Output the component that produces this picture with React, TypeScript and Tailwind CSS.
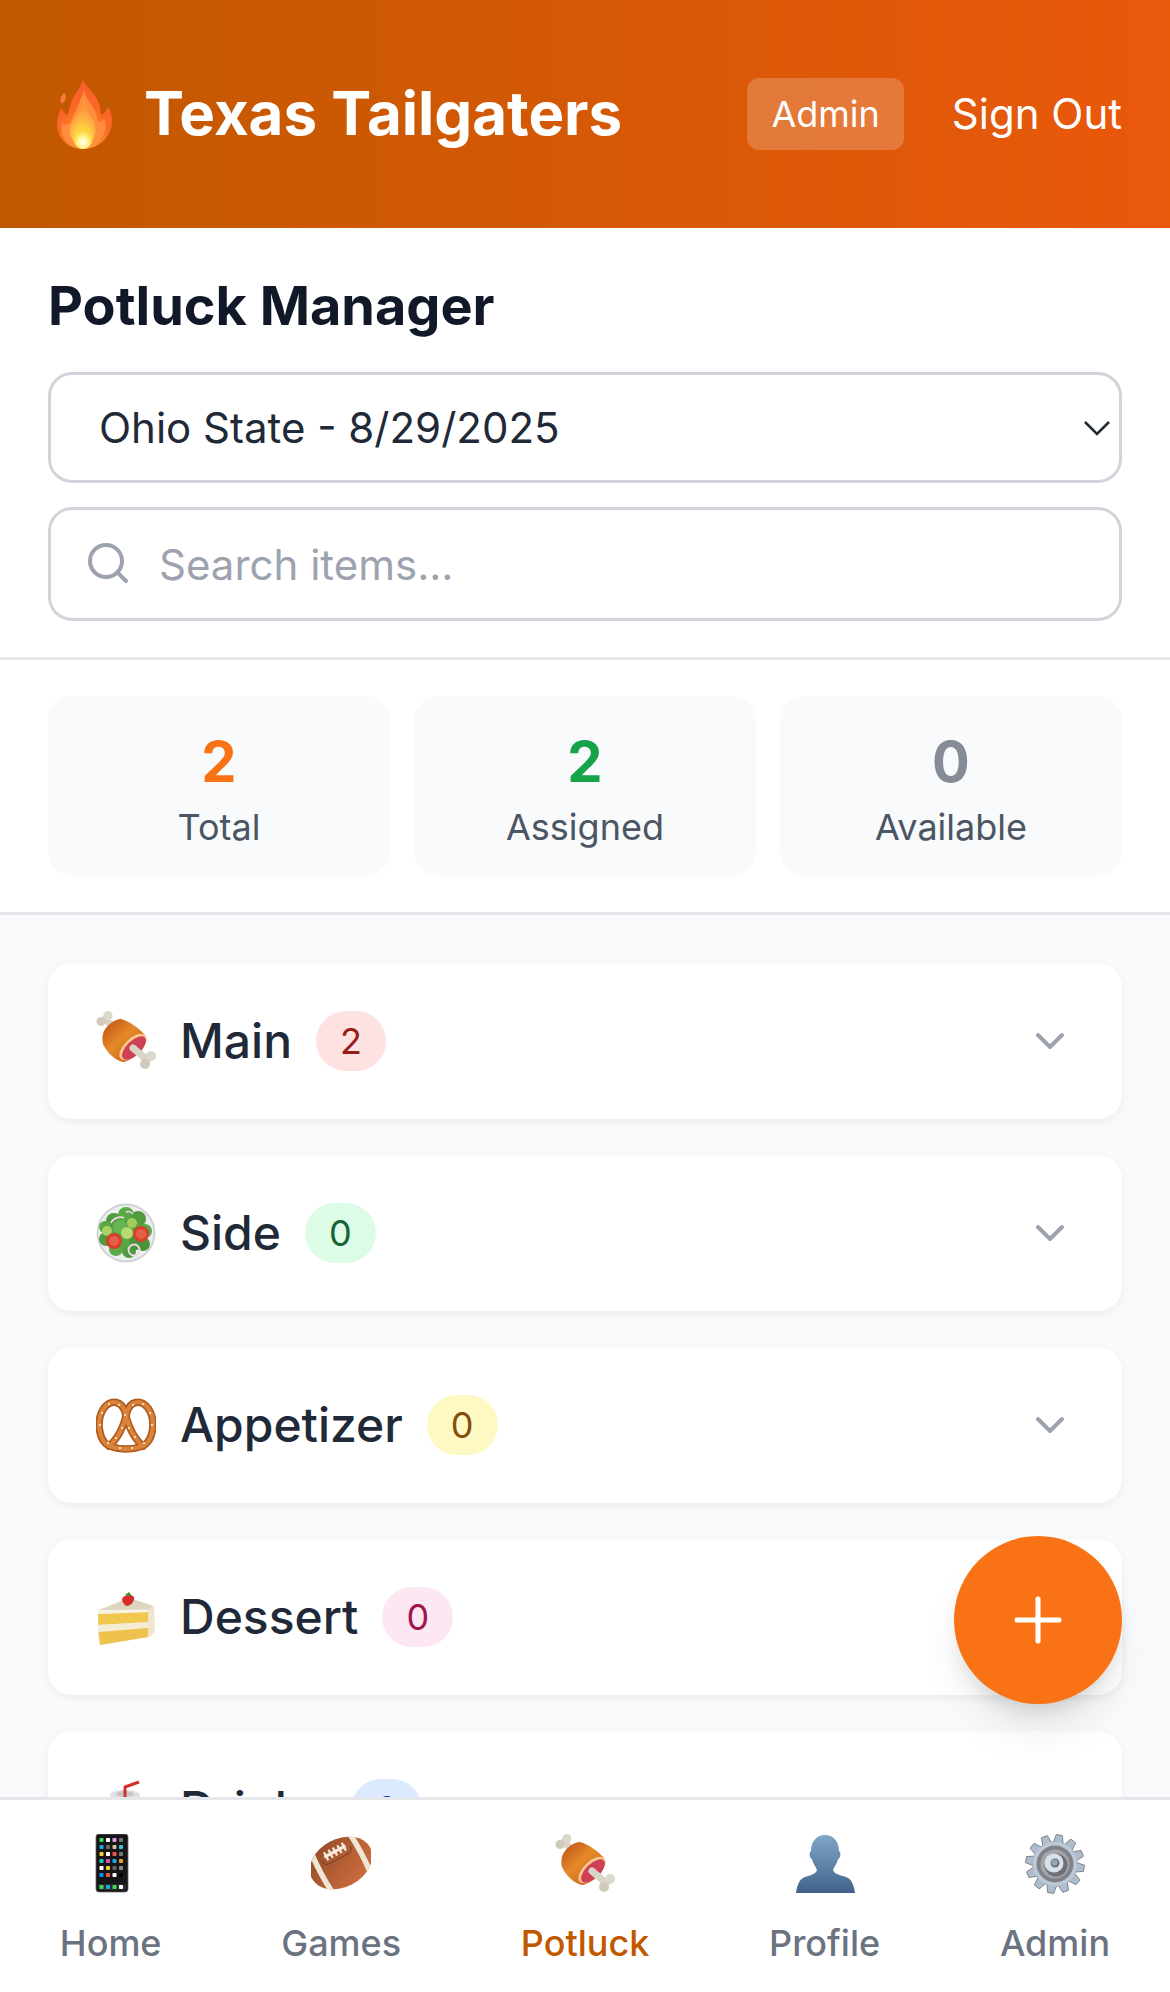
import React from "react";

function Flame() {
  return (
    <svg viewBox="0 0 90 90" className="w-[90px] h-[90px] shrink-0 -ml-2 mt-[2px]">
      <defs>
        <radialGradient id="fl1" cx="50%" cy="88%" r="85%">
          <stop offset="0" stopColor="#ffb02e" />
          <stop offset="0.55" stopColor="#fb6a24" />
          <stop offset="1" stopColor="#fa5a30" />
        </radialGradient>
        <radialGradient id="fl2" cx="50%" cy="90%" r="70%">
          <stop offset="0" stopColor="#fff9c0" />
          <stop offset="0.35" stopColor="#ffd84a" />
          <stop offset="1" stopColor="#ff9a3a" />
        </radialGradient>
        <radialGradient id="fl3" cx="50%" cy="72%" r="50%">
          <stop offset="0" stopColor="#ffffff" />
          <stop offset="0.5" stopColor="#fff48a" />
          <stop offset="1" stopColor="#ffd03a" />
        </radialGradient>
      </defs>
      <path d="M43 7C43 15 51 19 56 27C60 34 61 40 61 45C64 44 66 41 68 37C71 42 73 48 72 54C70 68 58 79 43 79C28 79 17 68 17 54C17 48 19 42 22 38C23 42 25 44 27 45C29 42 30 36 32 30C35 23 42 17 43 7Z" fill="url(#fl1)" />
      <path d="M24 23C27 25 26 30 22 34C19 30 21 26 24 23Z" fill="#fa7a40" />
      <path d="M44 20C46 31 55 36 57 48C58 54 61 53 64 49C68 58 63 71 52 76C47 79 38 79 33 76C24 71 20 62 22 53C25 56 29 55 31 52C34 44 40 33 44 20Z" fill="#ff8f3f" />
      <path d="M44 30C45 40 53 47 55 56C57 65 52 73 44 78C35 75 28 66 30 57C32 49 42 42 44 30Z" fill="url(#fl2)" />
      <ellipse cx="43" cy="67" rx="10" ry="12" fill="url(#fl3)" />
    </svg>
  );
}

function Meat() {
  return (
    <svg viewBox="0 0 60 60" className="w-[60px] h-[60px] shrink-0">
      <defs>
        <linearGradient id="mt1" x1="0.15" y1="0.15" x2="0.8" y2="0.85">
          <stop offset="0" stopColor="#c9601a" />
          <stop offset="0.45" stopColor="#e58a2a" />
          <stop offset="1" stopColor="#cc6416" />
        </linearGradient>
      </defs>
      <line x1="9" y1="8" x2="17" y2="16" stroke="#d8d4c8" strokeWidth="7" strokeLinecap="round" />
      <circle cx="12" cy="4.5" r="4.5" fill="#dcd8cc" />
      <circle cx="5" cy="10.5" r="4.5" fill="#cfcabc" />
      <path d="M8 20C12 13 19 8 25 8C33 10 44 18 49 24C50 27 48 33 44 39C39 46 32 51 27 51C20 50 11 42 7 33C6 29 6 24 8 20Z" fill="url(#mt1)" />
      <ellipse cx="37" cy="36" rx="8.5" ry="17" transform="rotate(46 37 36)" fill="#f8c88f" />
      <ellipse cx="38" cy="37" rx="7.2" ry="15" transform="rotate(46 38 37)" fill="#cf3f55" />
      <line x1="37" y1="37" x2="51" y2="49" stroke="#d8d4c8" strokeWidth="7" strokeLinecap="round" />
      <circle cx="55" cy="45" r="5" fill="#dcd8cc" />
      <circle cx="49" cy="53" r="5" fill="#cfcabc" />
    </svg>
  );
}

function Salad() {
  const leaves = [
    [18, 18, 8, "#4f9b3e"], [30, 12, 8, "#5aa946"], [42, 16, 8, "#4f9b3e"], [49, 28, 7, "#5aa946"], [47, 41, 7, "#4a9339"], [33, 48, 7, "#4f9b3e"], [20, 46, 7, "#5aa946"], [10, 36, 7, "#4f9b3e"], [9, 24, 6, "#5aa946"], [30, 30, 16, "#57a644"], [24, 24, 7, "#67b552"], [40, 40, 7, "#4a9339"],
  ] as const;
  return (
    <svg viewBox="0 0 60 60" className="w-[60px] h-[60px] shrink-0">
      <circle cx="30" cy="30" r="29.5" fill="#d0d3d4" />
      <circle cx="30" cy="30" r="27.5" fill="#eceeef" />
      {leaves.map((l, i) => (
        <circle key={i} cx={l[0]} cy={l[1]} r={l[2]} fill={l[3]} />
      ))}
      <circle cx="11" cy="28" r="5" fill="#a8d264" />
      <circle cx="31" cy="30" r="6" fill="#b8da70" />
      <circle cx="36" cy="20" r="5" fill="#a2cc5e" />
      <path d="M15 20C17 15 24 13 28 15" fill="none" stroke="#f1d8e2" strokeWidth="1.7" />
      <path d="M30 9C32 8 35 9 37 11" fill="none" stroke="#f1d8e2" strokeWidth="1.4" />
      <circle cx="45" cy="31" r="8" fill="#d5412b" />
      <circle cx="45" cy="31" r="5" fill="#e4604a" />
      <circle cx="18" cy="38" r="8" fill="#d5412b" />
      <circle cx="18" cy="38" r="5" fill="#e4604a" />
      <circle cx="38" cy="47" r="5.5" fill="none" stroke="#f1dce6" strokeWidth="1.8" />
    </svg>
  );
}

function Pretzel() {
  const d = [
    "M13 51C2 45 0 24 8 13C16 3 26 7 29 17C31 26 36 42 47 51",
    "M47 51C58 45 60 24 52 13C44 3 34 7 31 17C29 26 24 42 13 51",
    "M13 51C24 55 36 55 47 51",
  ];
  return (
    <svg viewBox="0 0 60 60" className="w-[60px] h-[60px] shrink-0">
      <g fill="none" strokeLinecap="round">
        {d.map((p) => (
          <path key={p} d={p} stroke="#b05a1e" strokeWidth="7.5" />
        ))}
        {d.map((p) => (
          <path key={p} d={p} stroke="#d9843a" strokeWidth="4.2" />
        ))}
      </g>
      {[[4, 30], [6, 18], [13, 9], [23, 10], [29, 20], [33, 33], [39, 42], [56, 30], [54, 18], [47, 9], [37, 10], [26, 33], [20, 43], [24, 53], [36, 53], [12, 48], [48, 48]].map((p, i) => (
        <circle key={i} cx={p[0]} cy={p[1]} r="1" fill="#fff6e8" />
      ))}
    </svg>
  );
}

function Cake() {
  return (
    <svg viewBox="0 0 60 60" className="w-[60px] h-[60px] shrink-0">
      <path d="M2 23L33 11L58 19L59 41C59 46 56 49 53 50L4 58L2 50Z" fill="#efe6cc" />
      <path d="M2 24L33 11L57 19L52 23Z" fill="#dcd5c0" />
      <path d="M2 27L52 25L52 35L2.5 38Z" fill="#f1c74e" />
      <path d="M2.5 38L52 35L52 41L3 45Z" fill="#f5edd3" />
      <path d="M3 45L52 41L52 50L4 58Z" fill="#efc24d" />
      <path d="M2 23L52 22.5L52 25L2 27Z" fill="#f7f2e2" />
      <path d="M26 12C28 7 36 7 38 10C39 15 34 19 31 19C28 18 26 15 26 12Z" fill="#d92b2b" />
      <path d="M29 8L33 5L36 9L32 9Z" fill="#4a8a2a" />
    </svg>
  );
}

function Drink() {
  return (
    <svg viewBox="0 0 60 60" className="w-[60px] h-[60px] shrink-0">
      <path d="M15 18L43 18L39 60L19 60Z" fill="#e8e8e8" />
      <ellipse cx="29" cy="16" rx="15" ry="5" fill="#e0e0e0" />
      <ellipse cx="29" cy="15" rx="9" ry="3" fill="#c6c6c6" />
      <path d="M29 18L29 8L43 3" fill="none" stroke="#d32f2f" strokeWidth="3" strokeLinejoin="round" />
    </svg>
  );
}

function Phone() {
  const colors = ["#3ddc5c", "#fff", "#e39be0", "#777", "#18a9e6", "#666", "#d8bd9c", "#30c9d8", "#f5d22e", "#fff", "#e8574a", "#777", "#1fc9c0", "#d94fc4", "#18a9e6", "#f59a1c", "#fff", "#f5d22e", "#666", "#888", "#1090e8", "#e8574a", "#fff", "#000"];
  return (
    <svg viewBox="0 0 60 60" className="w-[60px] h-[60px] shrink-0">
      <rect x="15" y="0" width="32" height="58" rx="3" fill="#161616" stroke="#666" strokeWidth="0.8" />
      {colors.map((c, i) => (
        <rect key={i} x={18.5 + (i % 4) * 6.5} y={4 + Math.floor(i / 4) * 7} width="4" height="4" rx="0.8" fill={c} />
      ))}
      <rect x="17" y="50" width="28" height="6" rx="1" fill="#2b2b2b" />
      {["#3ddc5c", "#18a9e6", "#3ddc5c", "#fff"].map((c, i) => (
        <rect key={i} x={18.5 + i * 6.5} y="51" width="4" height="4" rx="0.8" fill={c} />
      ))}
    </svg>
  );
}

function Football() {
  return (
    <svg viewBox="0 0 60 60" className="w-[60px] h-[60px] shrink-0">
      <defs>
        <linearGradient id="fb1" x1="0.2" y1="0.1" x2="0.8" y2="0.9">
          <stop offset="0" stopColor="#9a4f2a" />
          <stop offset="1" stopColor="#cb6d3f" />
        </linearGradient>
        <clipPath id="fbc">
          <ellipse cx="30" cy="29" rx="33" ry="24" />
        </clipPath>
      </defs>
      <g transform="rotate(-28 30 29)">
        <ellipse cx="30" cy="29" rx="33" ry="24" fill="url(#fb1)" />
        <g clipPath="url(#fbc)">
          <path d="M9 4C7 18 7 40 9 54" stroke="#efe6d4" strokeWidth="5.5" fill="none" />
          <path d="M51 4C53 18 53 40 51 54" stroke="#efe6d4" strokeWidth="5.5" fill="none" />
        </g>
        <path d="M18 16L42 16" stroke="#f3ecdd" strokeWidth="3" />
        {[20, 25, 30, 35, 40].map((x) => (
          <rect key={x} x={x - 1} y="11.5" width="2.2" height="9" fill="#f3ecdd" />
        ))}
        <path d="M14 18C14 26 20 24 30 24C40 24 46 26 46 18" fill="none" stroke="#5f3220" strokeWidth="0.7" />
      </g>
    </svg>
  );
}

function Person() {
  return (
    <svg viewBox="0 0 60 60" className="w-[60px] h-[60px] shrink-0">
      <defs>
        <linearGradient id="pr1" x1="0" y1="0" x2="0" y2="1">
          <stop offset="0" stopColor="#7ea6c8" />
          <stop offset="1" stopColor="#41638a" />
        </linearGradient>
      </defs>
      <path d="M30 1C39 1 44 8 44 17C46 18 46 24 43 25C42 30 39 33 38 36C39 40 45 41 51 43C57 45 59 52 60 59L1 59C2 52 4 45 10 43C16 41 21 40 22 36C21 33 18 30 17 25C14 24 14 18 16 17C16 8 21 1 30 1Z" fill="url(#pr1)" />
    </svg>
  );
}

function Gear() {
  const teeth = 12;
  const pts: string[] = [];
  for (let i = 0; i < teeth; i++) {
    const a = (i / teeth) * Math.PI * 2 + 0.15;
    const s = (Math.PI * 2) / teeth;
    [[a - s * 0.42, 22], [a - s * 0.2, 29.5], [a + s * 0.2, 29.5], [a + s * 0.42, 22]].forEach(([t, r]) => {
      pts.push(`${(30 + r * Math.cos(t)).toFixed(1)},${(30 + r * Math.sin(t)).toFixed(1)}`);
    });
  }
  return (
    <svg viewBox="0 0 60 60" className="w-[60px] h-[60px] shrink-0">
      <polygon points={pts.join(" ")} fill="#aebdcd" stroke="#6f6f74" strokeWidth="0.8" />
      <circle cx="30" cy="30" r="22" fill="#bccad8" />
      <circle cx="30" cy="30" r="18.5" fill="#7f8288" />
      <circle cx="30" cy="30" r="14.5" fill="#a4a6aa" />
      <circle cx="31" cy="31" r="11.5" fill="#6f7176" />
      <circle cx="29" cy="29" r="9.5" fill="#d9e2ea" />
      <circle cx="30" cy="29" r="4.5" fill="#6b7480" />
      <circle cx="29.5" cy="28.5" r="3" fill="#9aa6b2" />
    </svg>
  );
}

function Chevron() {
  return (
    <svg viewBox="0 0 24 24" fill="none" stroke="#9ca3af" strokeWidth="2" strokeLinecap="round" strokeLinejoin="round" className="w-12 h-12 shrink-0">
      <path d="m6 9 6 6 6-6" />
    </svg>
  );
}

const categories = [
  { name: "Main", icon: <Meat />, count: 2, badge: "bg-[#fee2e2] text-[#991b1b]" },
  { name: "Side", icon: <Salad />, count: 0, badge: "bg-[#dcfce7] text-[#166534]" },
  { name: "Appetizer", icon: <Pretzel />, count: 0, badge: "bg-[#fef9c3] text-[#854d0e]" },
  { name: "Dessert", icon: <Cake />, count: 0, badge: "bg-[#fce7f3] text-[#9d174d]" },
  { name: "Drinks", icon: <Drink />, count: 0, badge: "bg-[#dbeafe] text-[#1e40af]" },
];

const stats = [
  { value: "2", label: "Total", color: "text-[#f97316]" },
  { value: "2", label: "Assigned", color: "text-[#16a34a]" },
  { value: "0", label: "Available", color: "text-[#858c98]" },
];

const nav = [
  { label: "Home", icon: <Phone />, active: false },
  { label: "Games", icon: <Football />, active: false },
  { label: "Potluck", icon: <Meat />, active: true },
  { label: "Profile", icon: <Person />, active: false },
  { label: "Admin", icon: <Gear />, active: false },
];

export default function App() {
  return (
    <div className="relative w-[1170px] h-[1992px] flex flex-col overflow-hidden bg-[#f9fafb] font-['Inter',sans-serif]">
      <header className="h-[228px] shrink-0 flex items-center justify-between px-12 bg-gradient-to-r from-[#c05800] to-[#ea580c] text-white">
        <div className="flex items-center gap-[14px]">
          <Flame />
          <h1 className="text-[60px] leading-[84px] font-bold pb-[2px]">Texas Tailgaters</h1>
        </div>
        <div className="flex items-center gap-12">
          <button className="h-[72px] px-6 rounded-[12px] bg-white/20 text-[36px] leading-[48px]">Admin</button>
          <button className="text-[42px] leading-[60px]">Sign Out</button>
        </div>
      </header>

      <section className="shrink-0 h-[432px] bg-white border-b-[3px] border-[#e5e7eb] px-12 pt-12">
        <h2 className="text-[54px] leading-[60px] font-bold text-[#111827] mb-[36px]">Potluck Manager</h2>
        <div className="h-[111px] flex items-center justify-between rounded-[24px] border-[3px] border-[#d1d5db] pl-[48px] pr-[8px] text-[#1f2937] text-[42px]">
          <span>Ohio State - 8/29/2025</span>
          <svg viewBox="0 0 28 16" fill="none" stroke="#1f2937" strokeWidth="2.6" className="w-[28px] h-4">
            <path d="M2 2l12 12 12-12" />
          </svg>
        </div>
        <div className="mt-6 h-[114px] flex items-center rounded-[24px] border-[3px] border-[#d1d5db] pl-[33px] text-[#9ca3af] text-[42px]">
          <svg viewBox="0 0 24 24" fill="none" stroke="#9ca3af" strokeWidth="2" strokeLinecap="round" strokeLinejoin="round" className="w-12 h-12 shrink-0 -mt-[3px]">
            <circle cx="11" cy="11" r="8" />
            <path d="m21 21-4.3-4.3" />
          </svg>
          <span className="ml-[27px]">Search items...</span>
        </div>
      </section>

      <section className="shrink-0 h-[255px] bg-white border-b-[3px] border-[#e5e7eb] px-12 pt-9 grid grid-cols-3 gap-6">
        {stats.map((s) => (
          <div key={s.label} className="h-[180px] rounded-[24px] bg-[#f9fafb] flex flex-col items-center pt-[36px]">
            <div className={`text-[56px] leading-[60px] font-bold ${s.color}`}>{s.value}</div>
            <div className="mt-[5px] text-[36px] leading-[60px] text-[#4b5563]">{s.label}</div>
          </div>
        ))}
      </section>

      <main className="flex-1 min-h-0 overflow-hidden px-12 pt-12 flex flex-col gap-9">
        {categories.map((c) => (
          <div key={c.name} className="shrink-0 h-[156px] rounded-[24px] bg-white shadow-[0_3px_9px_rgba(0,0,0,0.06)] px-12 flex items-center justify-between">
            <div className="flex items-center">
              {c.icon}
              <span className="ml-[24px] text-[48px] leading-[60px] font-medium text-[#1f2937]">{c.name}</span>
              <span className={`ml-6 h-[60px] px-6 rounded-full flex items-center text-[36px] font-normal ${c.badge}`}>{c.count}</span>
            </div>
            <Chevron />
          </div>
        ))}
      </main>

      <nav className="shrink-0 h-[195px] bg-white border-t-[3px] border-[#e5e7eb] flex justify-around">
        {nav.map((n) => (
          <div key={n.label} className="flex flex-col items-center pt-[34px]">
            {n.icon}
            <span className={`mt-[25px] text-[36px] leading-[48px] font-medium ${n.active ? "text-[#c05800]" : "text-[#6b7280]"}`}>{n.label}</span>
          </div>
        ))}
      </nav>

      <button className="absolute right-12 bottom-[288px] w-[168px] h-[168px] rounded-full bg-[#f97316] shadow-[0_30px_45px_-9px_rgba(0,0,0,0.1),0_12px_18px_-6px_rgba(0,0,0,0.1)] flex items-center justify-center">
        <svg viewBox="0 0 24 24" fill="none" stroke="#fff" strokeWidth="1.7" strokeLinecap="round" className="w-[72px] h-[72px]">
          <path d="M5 12h14M12 5v14" />
        </svg>
      </button>
    </div>
  );
}
